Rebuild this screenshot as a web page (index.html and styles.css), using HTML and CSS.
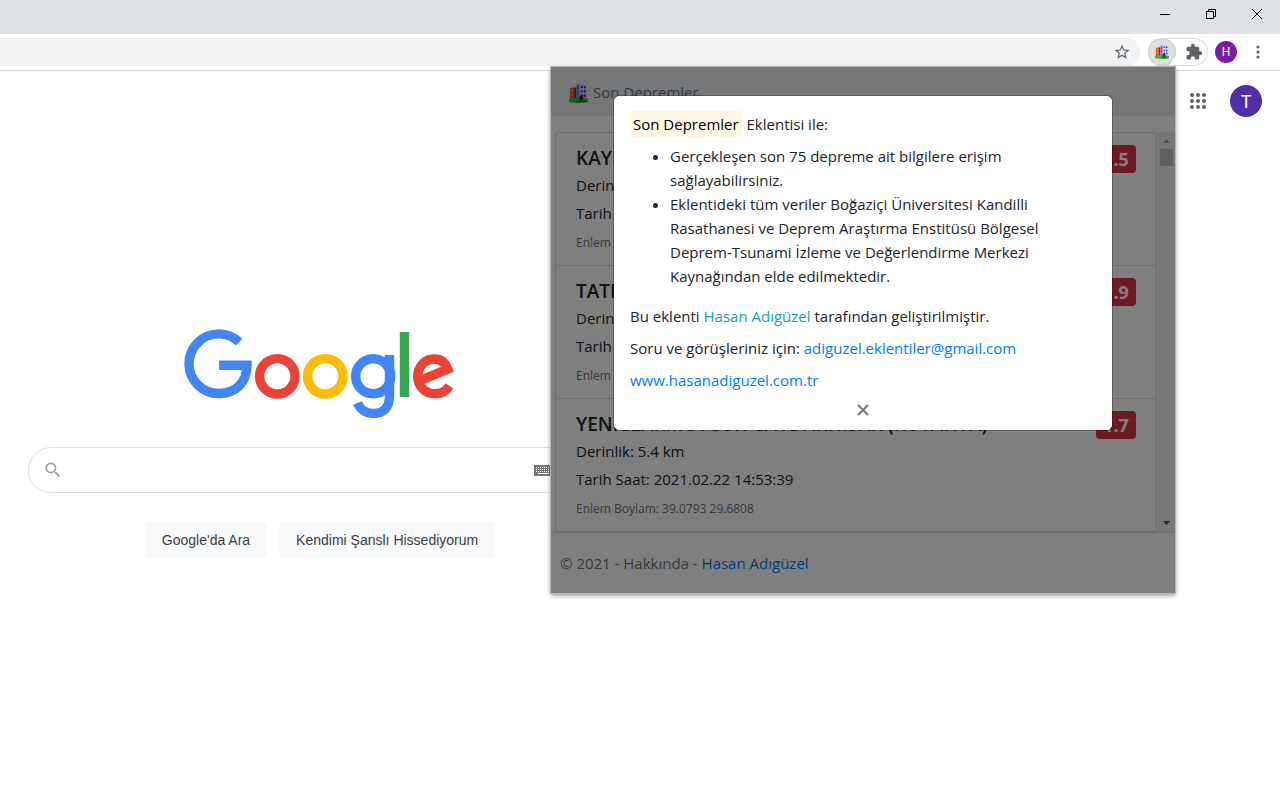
FILE: index.html
```html
<!DOCTYPE html>
<html lang="tr">
<head>
<meta charset="utf-8">
<meta name="viewport" content="width=device-width, initial-scale=1">
<title>Son Depremler</title>
<link rel="stylesheet" href="styles.css">
</head>
<body>
<svg class="defs" aria-hidden="true">
  <symbol id="city" viewBox="0 0 18 18">
    <path d="M1 4l5-1v11H1z" fill="#e8590c"/>
    <path d="M5 3l2 1v10H5z" fill="#a82020"/>
    <path d="M2 5h2v2H2zM2 9h2v2H2z" fill="#f9a825"/>
    <path d="M7 1l3-1v14H7z" fill="#8d7ae6"/>
    <path d="M10 0h7v14h-7z" fill="#d6d1fb"/>
    <path d="M11 2h2v2h-2zM14 2h2v2h-2zM11 6h2v2h-2zM14 6h2v2h-2zM11 10h2v2h-2zM14 10h2v2h-2zM8 3h1v2H8zM8 7h1v2H8z" fill="#5236c4"/>
    <path d="M0 14q9-2 18 0v3q-9 2-18 0z" fill="#35b64a"/>
    <path d="M12 10l2 3-1 1 2 1h-3v2h-1v-2H8l2-1-1-1z" fill="#14532d"/>
    <path d="M9 16h7v1H9z" fill="#2b4a3a"/>
  </symbol>
</svg>

<header class="titlebar">
  <button class="win" aria-label="Simge durumuna küçült"><svg width="12" height="12" viewBox="0 0 12 12"><path d="M1 6.500h10" stroke="#000" fill="none"/></svg></button>
  <button class="win" aria-label="Önceki boyut"><svg width="12" height="12" viewBox="0 0 12 12"><path d="M1.500 3.500h7v7h-7zM3.500 3v-1.500h7v7H9" stroke="#000" fill="none"/></svg></button>
  <button class="win" aria-label="Kapat"><svg width="12" height="12" viewBox="0 0 12 12"><path d="M1 1l10 10M11 1L1 11" stroke="#000" fill="none"/></svg></button>
</header>

<div class="toolbar">
  <div class="address">
    <button class="icon" aria-label="Yer işareti ekle"><svg width="18" height="18" viewBox="0 0 24 24"><path d="M22 9.240l-7.190-.62L12 2 9.190 8.630 2 9.240l5.460 4.730L5.820 21 12 17.270 18.180 21l-1.630-7.030zM12 15.400l-3.760 2.270 1-4.280-3.320-2.880 4.380-.38L12 6.100l1.710 4.040 4.380.38-3.320 2.880 1 4.280z" fill="#5f6368"/></svg></button>
  </div>
  <div class="extensions">
    <button class="icon active" aria-label="Son Depremler"><svg width="14" height="14"><use href="#city"/></svg></button>
    <button class="icon puzzle" aria-label="Uzantılar"><svg width="18" height="18" viewBox="0 0 24 24"><path d="M20.500 11H19V7a2 2 0 0 0-2-2h-4V3.500a2.500 2.500 0 0 0-5 0V5H4a2 2 0 0 0-2 2v3.800h1.500a2.700 2.700 0 0 1 0 5.400H2V20a2 2 0 0 0 2 2h3.800v-1.500a2.700 2.700 0 0 1 5.400 0V22H17a2 2 0 0 0 2-2v-4h1.500a2.500 2.500 0 0 0 0-5z" fill="#5f6368"/></svg></button>
  </div>
  <button class="profile" aria-label="Profil">H</button>
  <button class="icon more" aria-label="Menü"><svg width="4" height="14" viewBox="0 0 4 14" fill="#5f6368"><circle cx="2" cy="2" r="1.600"/><circle cx="2" cy="7" r="1.600"/><circle cx="2" cy="12" r="1.600"/></svg></button>
</div>

<div class="page">
  <nav class="account">
    <button class="icon" aria-label="Google uygulamaları"><svg width="16" height="16" viewBox="0 0 16 16" fill="#5f6368"><circle cx="2" cy="2" r="2"/><circle cx="8" cy="2" r="2"/><circle cx="14" cy="2" r="2"/><circle cx="2" cy="8" r="2"/><circle cx="8" cy="8" r="2"/><circle cx="14" cy="8" r="2"/><circle cx="2" cy="14" r="2"/><circle cx="8" cy="14" r="2"/><circle cx="14" cy="14" r="2"/></svg></button>
    <button class="avatar" aria-label="Google Hesabı">T</button>
  </nav>
  <main class="search">
    <svg class="logo" role="img" aria-label="Google" width="272" height="92" viewBox="0 0 272 92" fill="none" stroke-width="9.400">
      <path d="M55.200 14.200A29.800 29.800 0 0 0 35 5.900A29.900 29.900 0 0 0 5 35.700A29.900 29.900 0 0 0 35 65.500C52 65.500 63 54 63 37.300H35" stroke="#4285f4"/>
      <circle cx="93.300" cy="48.300" r="17.700" stroke="#ea4335"/>
      <circle cx="141.300" cy="48.300" r="17.700" stroke="#fbbc05"/>
      <circle cx="189.200" cy="48.300" r="17.500" stroke="#4285f4"/>
      <path d="M205.500 27V68C205.500 80 199 85.500 189.500 85.500C181.500 85.500 176 81 173.500 75" stroke="#4285f4"/>
      <path d="M220.500 4v65" stroke="#34a853"/>
      <path d="M265.500 57.800C262 63 257 65.800 251 65.800C241 65.800 233.700 58 233.700 48.500C233.700 38.500 241 31 250 31C257 31 261.500 35 263.800 41.200L236 52.600" stroke="#ea4335"/>
    </svg>
    <form class="search-form">
      <div class="search-box">
        <svg width="20" height="20" viewBox="0 0 24 24"><path d="M15.500 14h-.79l-.28-.27A6.470 6.470 0 0 0 16 9.500 6.500 6.500 0 1 0 9.500 16c1.610 0 3.090-.59 4.230-1.570l.27.28v.79l5 4.990L20.490 19zM9.500 14a4.500 4.500 0 1 1 0-9 4.500 4.500 0 0 1 0 9z" fill="#9aa0a6"/></svg>
        <input type="text" aria-label="Ara">
        <svg width="19" height="11" viewBox="0 0 19 11"><path d="M0 0h19v11H0z" fill="#767676"/><path d="M2 2.500h15M2 4.500h15M2 6.500h15" stroke="#fff" stroke-dasharray="1 1"/><path d="M4 8.500h11" stroke="#fff"/></svg>
        <span class="mic"></span>
      </div>
      <div class="search-actions">
        <button type="button">Google'da Ara</button>
        <button type="button">Kendimi Şanslı Hissediyorum</button>
      </div>
    </form>
  </main>
</div>

<section class="popup">
  <div class="brand"><svg width="19" height="19"><use href="#city"/></svg><span>Son Depremler</span></div>
  <div class="scroller">
    <ul class="quakes">
      <li>
        <div class="quake-head"><h5>KAYI</h5><span class="badge">1.5</span></div>
        <p>Derinlik</p>
        <p>Tarih</p>
        <small>Enlem</small>
      </li>
      <li>
        <div class="quake-head"><h5>TATI</h5><span class="badge">1.9</span></div>
        <p>Derinlik</p>
        <p>Tarih</p>
        <small>Enlem</small>
      </li>
      <li>
        <div class="quake-head"><h5>YENICEARMUTCUK-CAVDARHISAR (KUTAHYA)</h5><span class="badge">1.7</span></div>
        <p>Derinlik: 5.4 km</p>
        <p>Tarih Saat: 2021.02.22 14:53:39</p>
        <small>Enlem Boylam: 39.0793 29.6808</small>
      </li>
    </ul>
    <div class="scrollbar">
      <svg width="7" height="4" viewBox="0 0 7 4"><path d="M0 4l3.500-4L7 4z" fill="#a3a3a3"/></svg>
      <div class="thumb"></div>
      <svg class="down" width="7" height="4" viewBox="0 0 7 4"><path d="M0 0l3.500 4L7 0z" fill="#505050"/></svg>
    </div>
  </div>
  <footer>© 2021 - Hakkında - <a href="#">Hasan Adıgüzel</a></footer>

  <div class="backdrop">
    <div class="dialog" role="dialog" aria-label="Hakkında">
      <p><mark>Son Depremler</mark> Eklentisi ile:</p>
      <ul>
        <li>Gerçekleşen son 75 depreme ait bilgilere erişim<br>sağlayabilirsiniz.</li>
        <li>Eklentideki tüm veriler Boğaziçi Üniversitesi Kandilli<br>Rasathanesi ve Deprem Araştırma Enstitüsü Bölgesel<br>Deprem-Tsunami İzleme ve Değerlendirme Merkezi<br>Kaynağından elde edilmektedir.</li>
      </ul>
      <p>Bu eklenti <span class="info">Hasan Adıgüzel</span> tarafından geliştirilmiştir.</p>
      <p>Soru ve görüşleriniz için: <a href="#">adiguzel.eklentiler@gmail.com</a></p>
      <p><a href="#">www.hasanadiguzel.com.tr</a></p>
      <button class="close" aria-label="Kapat"><svg width="12" height="12" viewBox="0 0 12 12"><path d="M1 1l10 10M11 1L1 11" stroke="#7f7f7f" stroke-width="2.400" fill="none"/></svg></button>
    </div>
  </div>
</section>
</body>
</html>
```
FILE: styles.css
```css
* { box-sizing: border-box; }
body {
  margin: 0;
  min-height: 100vh;
  position: relative;
  display: flex;
  flex-direction: column;
  background: #fff;
  font-family: "Liberation Sans", Arial, sans-serif;
  overflow-x: hidden;
}
button { border: 0; padding: 0; background: none; font: inherit; }
button svg { display: block; }
ul, p, h5 { margin: 0; padding: 0; }
a { text-decoration: none; color: #007bff; }
.defs { position: absolute; width: 0; height: 0; }

.titlebar {
  display: flex;
  justify-content: flex-end;
  height: 34px;
  padding-bottom: 6px;
  background: #dee1e6;
}
.win { width: 46px; display: grid; place-items: center; }

.toolbar {
  display: flex;
  align-items: center;
  height: 37px;
  padding-right: 20px;
  border-bottom: 1px solid #d8dadd;
}
.icon { display: grid; place-items: center; }
.address {
  flex: 1;
  display: flex;
  align-items: center;
  justify-content: flex-end;
  height: 28px;
  padding-right: 9px;
  background: #f1f3f4;
  border-radius: 0 14px 14px 0;
}
.extensions {
  display: flex;
  margin: 0 7px 0 8px;
  border-radius: 14px;
  box-shadow: inset 0 0 0 1px #dadce0;
}
.active { width: 28px; height: 28px; border-radius: 50%; background: #dfdfdf; box-shadow: inset 0 0 0 1px #d0d2d5; }
.puzzle { width: 32px; height: 28px; padding-left: 4px; }
.profile {
  width: 22px;
  height: 22px;
  border-radius: 50%;
  background: #7b1fa2;
  color: #fff;
  font-family: Roboto, sans-serif;
  font-size: 12px;
}
.more { margin-left: 19px; }

.page { flex: 1; }
.account {
  display: flex;
  justify-content: flex-end;
  align-items: center;
  gap: 24px;
  padding: 14px 18px 0 0;
}
.avatar {
  width: 32px;
  height: 32px;
  border-radius: 50%;
  background: #512da8;
  color: #fff;
  font-family: Roboto, sans-serif;
  font-size: 18px;
}
.search {
  display: flex;
  flex-direction: column;
  align-items: center;
  width: 50%;
  padding: 211px 0 0 0;
}
.logo { display: block; }
.search-form { width: 584px; margin-top: 27px; }
.search-box {
  display: flex;
  align-items: center;
  height: 46px;
  padding: 0 12px 0 14px;
  border: 1px solid #dfe1e5;
  border-radius: 24px;
}
.search-box input {
  flex: 1;
  border: 0;
  outline: 0;
  background: transparent;
  font-size: 16px;
  margin-left: 12px;
}
.mic { width: 46px; }
.search-actions { display: flex; justify-content: center; gap: 12px; margin-top: 29px; }
.search-actions button {
  height: 36px;
  padding: 0 17px;
  border-radius: 4px;
  background: #f8f9fa;
  color: #3c4043;
  font-size: 14px;
}

.popup {
  position: absolute;
  top: 67px;
  right: 105px;
  width: 624px;
  background: #fff;
  box-shadow: 0 0 0 1px #b5b5b5, 0 2px 5px rgba(0, 0, 0, .5);
  color: #212529;
  font-family: "Segoe UI", "Open Sans", sans-serif;
  font-size: 15px;
  line-height: 24px;
}
.brand {
  display: flex;
  align-items: center;
  gap: 5px;
  height: 49px;
  padding: 0 18px;
  background: #e9ecef;
  border-radius: 0 0 4px 4px;
  color: #6c757d;
}
.brand svg { margin-top: 3px; }
.scroller { display: flex; margin-top: 16px; padding-left: 4px; border-bottom: 1px solid #dfdfdf; }
.quakes { flex: 1; list-style: none; border: 1px solid #dfdfdf; border-radius: 4px 4px 0 0; border-bottom: 0; }
.quakes li { padding: 12px 20px 10px; border-bottom: 1px solid #dfdfdf; }
.quakes p { margin-bottom: 4px; }
.quakes small { display: block; padding-top: 2px; font-size: 12px; color: #6c757d; }
.quake-head { display: flex; justify-content: space-between; }
h5 { font-size: 19px; line-height: 26px; font-weight: 600; }
.badge {
  min-width: 40px;
  height: 28px;
  padding: 0 7px;
  border-radius: 4px;
  background: #dc3545;
  color: #fff;
  font-size: 18px;
  line-height: 28px;
  font-weight: 700;
  text-align: center;
}
.scrollbar {
  display: flex;
  flex-direction: column;
  align-items: center;
  width: 17px;
  margin-left: 1px;
  padding: 7px 0;
  background: #f1f1f1;
}
.thumb { width: 13px; height: 17px; margin-top: 6px; background: #c1c1c1; }
.down { margin-top: auto; }
.popup footer { padding: 18px 9px; color: #6c757d; }
.backdrop {
  position: absolute;
  inset: 0;
  padding: 29px 63px 0;
  background: rgba(0, 0, 0, .5);
}
.dialog {
  display: flex;
  flex-direction: column;
  padding: 15px 15px 9px;
  border: 1px solid #fff;
  border-radius: 5px;
  background: #fff;
  box-shadow: 0 0 0 1px rgba(0, 0, 0, .25);
}
.dialog p { margin-bottom: 8px; }
.dialog ul { padding-left: 40px; margin-bottom: 16px; }
mark { padding: 3px; margin-right: 1px; background: #fcf8e3; color: #000; }
.info { color: #17a2b8; }
.close { align-self: center; padding: 4px; }
```
